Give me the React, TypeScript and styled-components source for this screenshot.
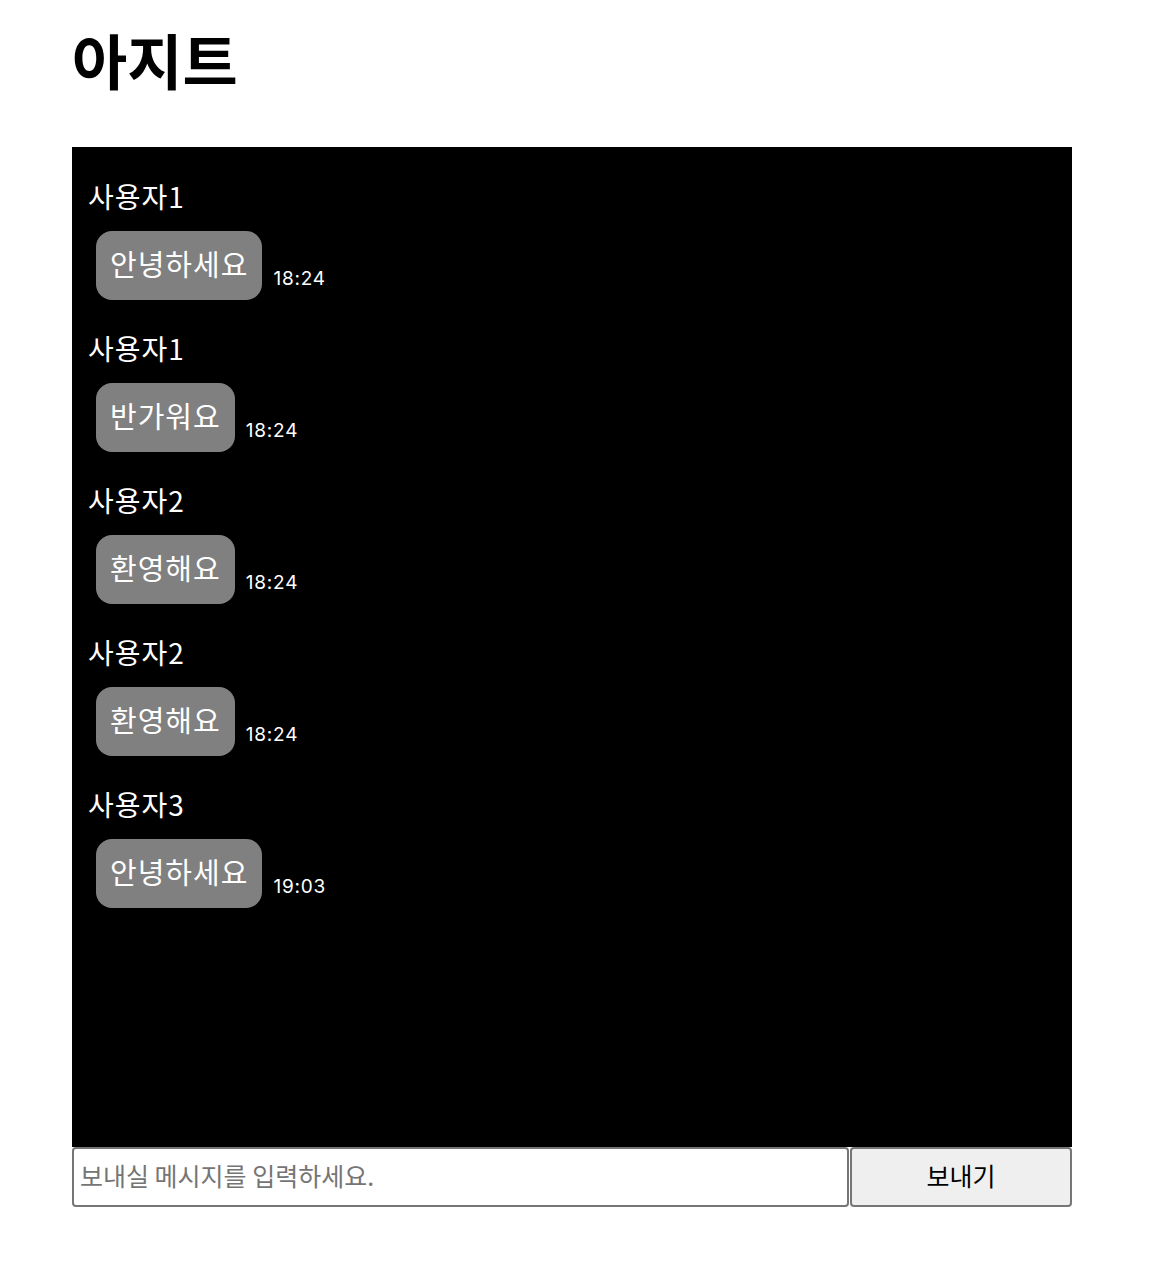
import styled, { createGlobalStyle } from "styled-components"

const GlobalStyle = createGlobalStyle`
    body {
        margin: 0;
        background: #ffffff;
        font-family: "Noto Sans CJK KR", "Noto Sans", sans-serif;
    }
`

const Page = styled.div`
    width: 1000px;
    padding: 0 0 40px 72px;
`

const Title = styled.h1`
    margin: 0;
    padding-top: 17px;
    height: 147px;
    box-sizing: border-box;
    font-size: 60px;
    line-height: 84px;
    font-weight: 700;
    color: #000;
`

const ChatBox = styled.div`
    height: 1000px;
    box-sizing: border-box;
    background: #000;
    padding: 29px 16px;
    display: flex;
    flex-direction: column;
    gap: 28px;
`

const MessageItem = styled.div`
    display: flex;
    flex-direction: column;
    gap: 15px;
`

const UserName = styled.div`
    color: #fff;
    font-size: 28px;
    line-height: 40px;
    letter-spacing: 1px;
`

const BubbleRow = styled.div`
    display: flex;
    align-items: flex-end;
    gap: 11px;
    padding-left: 8px;
`

const Bubble = styled.div`
    background: #808080;
    color: #fff;
    font-size: 29px;
    line-height: 41px;
    letter-spacing: 1px;
    padding: 12px 14px 16px 14px;
    border-radius: 16px;
`

const Time = styled.span`
    color: #fff;
    font-family: Inter, "Noto Sans", sans-serif;
    font-size: 19px;
    line-height: 24px;
    margin-bottom: 9px;
    letter-spacing: 0.8px;
`

const InputRow = styled.form`
    display: flex;
    height: 60px;
`

const MessageInput = styled.input`
    flex: 1;
    min-width: 0;
    box-sizing: border-box;
    border: 2px solid #767676;
    border-radius: 4px;
    padding: 0 6px 5px 6px;
    font-family: "Noto Sans CJK KR", "Noto Sans", sans-serif;
    font-size: 25px;
    color: #000;
    &::placeholder {
        color: #757575;
    }
`

const SendButton = styled.button`
    width: 222px;
    margin-left: 1px;
    padding-bottom: 5px;
    box-sizing: border-box;
    border: 2px solid #767676;
    border-radius: 4px;
    background: #efefef;
    font-family: "Noto Sans CJK KR", "Noto Sans", sans-serif;
    font-size: 25px;
    color: #000;
`

const messages = [
    { user: "사용자1", text: "안녕하세요", time: "18:24" },
    { user: "사용자1", text: "반가워요", time: "18:24" },
    { user: "사용자2", text: "환영해요", time: "18:24" },
    { user: "사용자2", text: "환영해요", time: "18:24" },
    { user: "사용자3", text: "안녕하세요", time: "19:03" },
]

const App = () => {
    return (
        <>
            <GlobalStyle />
            <Page>
                <Title>아지트</Title>
                <ChatBox>
                    {messages.map((item, index) => (
                        <MessageItem key={index}>
                            <UserName>{item.user}</UserName>
                            <BubbleRow>
                                <Bubble>{item.text}</Bubble>
                                <Time>{item.time}</Time>
                            </BubbleRow>
                        </MessageItem>
                    ))}
                </ChatBox>
                <InputRow onSubmit={(e) => e.preventDefault()}>
                    <MessageInput placeholder="보내실 메시지를 입력하세요." />
                    <SendButton type="submit">보내기</SendButton>
                </InputRow>
            </Page>
        </>
    )
}

export default App
